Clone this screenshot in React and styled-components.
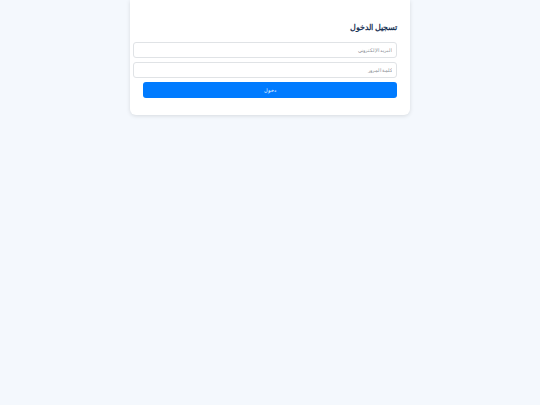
import React from "react";
import styled, { createGlobalStyle } from "styled-components";

const GlobalStyle = createGlobalStyle`
  html, body {
    margin: 0;
    padding: 0;
    background: #f4f8fd;
    font-family: Arial, "Liberation Sans", sans-serif;
  }
`;

const Page = styled.div`
  min-height: 405px;
  display: flex;
  justify-content: center;
  align-items: flex-start;
`;

const Card = styled.form`
  direction: rtl;
  width: 254px;
  padding: 13px 13px 17px;
  background: #ffffff;
  border-radius: 0 0 6px 6px;
  box-shadow: 0 1px 4px rgba(0, 0, 0, 0.12);
  display: flex;
  flex-direction: column;
  gap: 4px;
`;

const Title = styled.h2`
  margin: 7px 0 2px;
  font-size: 8px;
  line-height: 16px;
  font-weight: 700;
  color: #1d3557;
`;

const Input = styled.input`
  box-sizing: content-box;
  width: 100%;
  height: 14px;
  padding: 0 4px;
  border: 1px solid #e0e3e6;
  border-radius: 3px;
  font-family: inherit;
  font-size: 4.5px;
  outline: none;
  &::placeholder {
    color: #868b91;
  }
`;

const Button = styled.button`
  height: 16px;
  border: none;
  border-radius: 3px;
  background: #007bff;
  color: #ffffff;
  font-family: inherit;
  font-size: 4.5px;
  cursor: pointer;
`;

export default function App() {
  return (
    <>
      <GlobalStyle />
      <Page>
        <Card onSubmit={(e) => e.preventDefault()}>
          <Title>تسجيل الدخول</Title>
          <Input type="email" placeholder="البريد الإلكتروني" />
          <Input type="password" placeholder="كلمة المرور" />
          <Button type="submit">دخول</Button>
        </Card>
      </Page>
    </>
  );
}
